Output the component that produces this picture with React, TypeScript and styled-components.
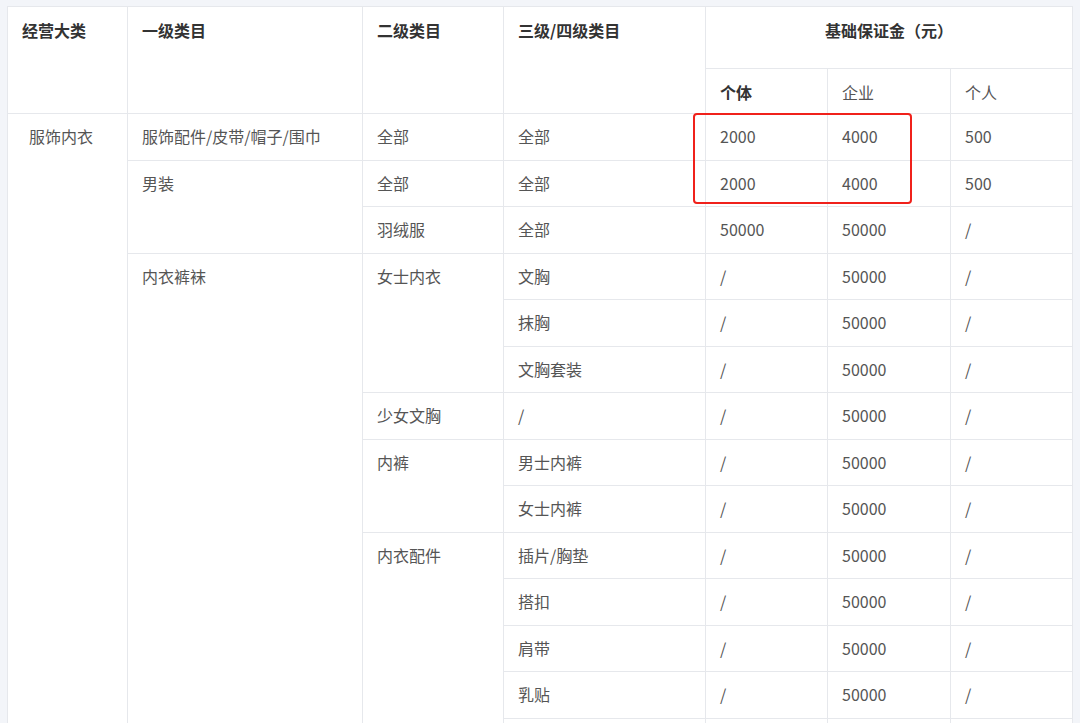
import * as React from 'react';
import styled, { createGlobalStyle } from 'styled-components';

const Global = createGlobalStyle`
  body {
    margin: 0;
    background: #f3f5f9;
    font-family: "Noto Sans CJK SC", "Noto Sans", sans-serif;
    overflow: hidden;
  }
`;

const Page = styled.div`
  padding: 6px 8px 0 7px;
  position: relative;
`;

const Table = styled.table`
  width: 1065px;
  border-collapse: collapse;
  background: #fff;
  table-layout: fixed;
  font-size: 16px;
  color: #555;
`;

const Th = styled.th<{ center?: boolean; light?: boolean }>`
  border: 1px solid #e6e8ec;
  font-weight: ${p => (p.light ? 400 : 700)};
  color: ${p => (p.light ? '#555' : '#333')};
  text-align: ${p => (p.center ? 'center' : 'left')};
  vertical-align: top;
  padding: 12px 14px 0;
  height: 33px;
  line-height: 22px;
`;

const Td = styled.td<{ first?: boolean }>`
  border: 1px solid #e6e8ec;
  vertical-align: top;
  padding: 11px 14px 0 ${p => (p.first ? '21px' : '14px')};
  height: 34.5px;
  line-height: 22px;
  white-space: nowrap;
`;

const Highlight = styled.div`
  position: absolute;
  left: 693px;
  top: 113px;
  width: 215px;
  height: 87px;
  border: 2px solid #f0211b;
  border-radius: 4px;
  pointer-events: none;
`;

type Row = { l1?: [string, number]; l2?: [string, number]; l3: string; a: string; b: string; c: string };

const rows: Row[] = [
  { l1: ['服饰配件/皮带/帽子/围巾', 1], l2: ['全部', 1], l3: '全部', a: '2000', b: '4000', c: '500' },
  { l1: ['男装', 2], l2: ['全部', 1], l3: '全部', a: '2000', b: '4000', c: '500' },
  { l2: ['羽绒服', 1], l3: '全部', a: '50000', b: '50000', c: '/' },
  { l1: ['内衣裤袜', 11], l2: ['女士内衣', 3], l3: '文胸', a: '/', b: '50000', c: '/' },
  { l3: '抹胸', a: '/', b: '50000', c: '/' },
  { l3: '文胸套装', a: '/', b: '50000', c: '/' },
  { l2: ['少女文胸', 1], l3: '/', a: '/', b: '50000', c: '/' },
  { l2: ['内裤', 2], l3: '男士内裤', a: '/', b: '50000', c: '/' },
  { l3: '女士内裤', a: '/', b: '50000', c: '/' },
  { l2: ['内衣配件', 5], l3: '插片/胸垫', a: '/', b: '50000', c: '/' },
  { l3: '搭扣', a: '/', b: '50000', c: '/' },
  { l3: '肩带', a: '/', b: '50000', c: '/' },
  { l3: '乳贴', a: '/', b: '50000', c: '/' },
  { l3: '', a: '', b: '', c: '' },
];

export default function App() {
  return (
    <Page>
      <Global />
      <Table>
        <colgroup>
          <col style={{ width: 120 }} />
          <col style={{ width: 235 }} />
          <col style={{ width: 141 }} />
          <col style={{ width: 202 }} />
          <col style={{ width: 122 }} />
          <col style={{ width: 123 }} />
          <col style={{ width: 122 }} />
        </colgroup>
        <thead>
          <tr>
            <Th rowSpan={2}>经营大类</Th>
            <Th rowSpan={2}>一级类目</Th>
            <Th rowSpan={2}>二级类目</Th>
            <Th rowSpan={2}>三级/四级类目</Th>
            <Th colSpan={3} center style={{ height: 49 }}>基础保证金（元）</Th>
          </tr>
          <tr>
            <Th style={{ height: 32 }}>个体</Th>
            <Th light style={{ height: 32 }}>企业</Th>
            <Th light style={{ height: 32 }}>个人</Th>
          </tr>
        </thead>
        <tbody>
          {rows.map((r, i) => (
            <tr key={i}>
              {i === 0 && (
                <Td first rowSpan={14}>服饰内衣</Td>
              )}
              {r.l1 && <Td rowSpan={r.l1[1]}>{r.l1[0]}</Td>}
              {r.l2 && <Td rowSpan={r.l2[1]}>{r.l2[0]}</Td>}
              {i === 13 && <Td />}
              <Td>{r.l3}</Td>
              <Td>{r.a}</Td>
              <Td>{r.b}</Td>
              <Td>{r.c}</Td>
            </tr>
          ))}
        </tbody>
      </Table>
      <Highlight />
    </Page>
  );
}
